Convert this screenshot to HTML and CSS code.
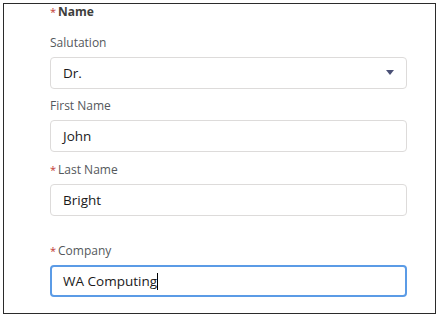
FILE: index.html
```html
<!DOCTYPE html>
<html>
<head>
<meta charset="utf-8">
<link rel="stylesheet" href="styles.css">
</head>
<body>
<div class="frame">
  <div class="form">
    <div class="legend"><abbr class="req">*</abbr>Name</div>
    <div class="field">
      <div class="label">Salutation</div>
      <div class="input select">
        <span>Dr.</span>
        <svg class="caret" width="8" height="5" viewBox="0 0 8 5"><path d="M0 0H8L4 5Z" fill="#4a5076"/></svg>
      </div>
    </div>
    <div class="field">
      <div class="label">First Name</div>
      <div class="input"><span>John</span></div>
    </div>
    <div class="field">
      <div class="label"><abbr class="req">*</abbr>Last Name</div>
      <div class="input"><span>Bright</span></div>
    </div>
    <div class="field company">
      <div class="label"><abbr class="req">*</abbr>Company</div>
      <div class="input focus"><span>WA Computing</span><span class="cursor"></span></div>
    </div>
  </div>
</div>
</body>
</html>
```
FILE: styles.css
```css
html, body {
  margin: 0;
  padding: 0;
  background: #fff;
}
body {
  font-family: "Open Sans", "Lato", sans-serif;
  color: #3e3e3c;
}
.frame {
  margin: 3px 0 0 3px;
  width: 431px;
  height: 309px;
  border: 1.5px solid #2b2b2b;
  box-sizing: content-box;
}
.form {
  padding: 0 0 0 46px;
  width: 357px;
}
.legend {
  font-size: 12px;
  font-weight: 700;
  line-height: 16px;
  color: #3e3e3c;
}
.req {
  color: #c23934;
  text-decoration: none;
  font-weight: 400;
  margin-right: 2px;
  font-size: 11px;
}
.field {
  margin-top: 8.5px;
}
.legend + .field {
  margin-top: 13.5px;
}
.field.company {
  margin-top: 26.5px;
}
.label {
  font-size: 12px;
  line-height: 18px;
  color: #54585c;
  margin-bottom: 5px;
}
.input {
  height: 32px;
  box-sizing: border-box;
  border: 1px solid #dddbda;
  border-radius: 4px;
  display: flex;
  align-items: center;
  padding: 0 12px;
  font-size: 13.5px;
  color: #1a1a1a;
  background: #fff;
}
.select {
  justify-content: space-between;
}
.focus {
  border: 2px solid #5b9be6;
  padding: 0 11px;
}
.cursor {
  display: inline-block;
  width: 1px;
  height: 17px;
  background: #000;
}
```
